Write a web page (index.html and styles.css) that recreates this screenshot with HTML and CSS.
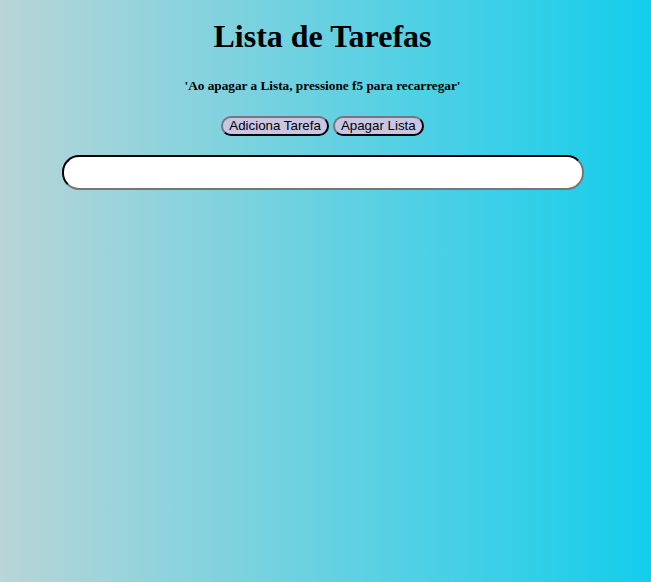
FILE: index.html
```html
<!DOCTYPE html>
<html lang="pt">
<head>
<meta charset="utf-8">
<title>Lista de Tarefas</title>
<link rel="stylesheet" href="styles.css">
</head>
<body class="page">
  <main class="app">
    <h1 class="title">Lista de Tarefas</h1>
    <h5 class="hint">'Ao apagar a Lista, pressione f5 para recarregar'</h5>
    <div class="actions">
      <button class="btn" type="button">Adiciona Tarefa</button>
      <button class="btn" type="button">Apagar Lista</button>
    </div>
    <div class="field-row">
      <input class="task-input" type="text">
    </div>
  </main>
</body>
</html>
```

FILE: styles.css
```css
html, body {
  height: 100%;
}
.page {
  margin: 0;
  padding: 0 8px;
  min-height: 100%;
  background: linear-gradient(to right, #b9d5d7, #14cdec);
  font-family: "Liberation Serif", "Times New Roman", serif;
  color: #000;
}
.app {
  text-align: center;
  padding-top: 18px;
  padding-right: 6px;
}
.title {
  font-size: 32px;
  font-weight: bold;
  margin: 0;
  line-height: 37px;
}
.hint {
  font-size: 13.28px;
  font-weight: bold;
  margin: 23px 0 0;
  line-height: 15px;
}
.actions {
  margin-top: 23px;
  display: flex;
  justify-content: center;
  gap: 4px;
}
.btn {
  font-family: "Liberation Sans", Arial, sans-serif;
  font-size: 13.33px;
  background: #c9c6e3;
  color: #000;
  border: 2px outset #555;
  border-color: #767676 #222 #222 #767676;
  border-radius: 10px;
  padding: 1px 6px;
  height: 20px;
  line-height: 14px;
}
.field-row {
  margin-top: 19px;
  display: flex;
  justify-content: center;
}
.task-input {
  width: 522px;
  height: 35px;
  box-sizing: border-box;
  border-radius: 17px;
  border: 2px inset #767676;
  border-color: #222 #767676 #767676 #222;
  background: #fff;
  padding: 0 14px;
}
```
